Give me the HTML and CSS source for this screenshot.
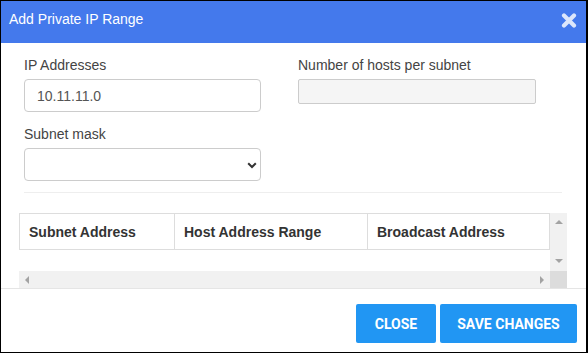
FILE: index.html
```html
<!DOCTYPE html>
<html>
<head>
<meta charset="utf-8">
<link rel="stylesheet" href="styles.css">
</head>
<body>
<div class="modal">
  <div class="modal-header">
    <h4 class="modal-title">Add Private IP Range</h4>
    <button class="close-btn" aria-label="Close">
      <svg width="16" height="15" viewBox="0 0 16 15"><path d="M3 2.5 L13 12.5 M13 2.5 L3 12.5" stroke="#dce6fb" stroke-width="4.2" stroke-linecap="round" fill="none"/></svg>
    </button>
  </div>
  <div class="modal-body">
    <div class="form-grid">
      <div class="field">
        <label>IP Addresses</label>
        <input class="input" type="text" value="10.11.11.0">
      </div>
      <div class="field">
        <label>Number of hosts per subnet</label>
        <input class="input readonly" type="text" disabled>
      </div>
      <div class="field">
        <label>Subnet mask</label>
        <div class="select-wrap">
          <select class="input select"><option></option></select>
          <svg class="chevron" width="10" height="7" viewBox="0 0 10 7"><path d="M1.2 1.2 L5 5 L8.8 1.2" stroke="#333" stroke-width="2" fill="none"/></svg>
        </div>
      </div>
    </div>
    <hr class="divider">
    <div class="scroll-box">
      <div class="scroll-view">
        <table class="results">
          <thead>
            <tr>
              <th class="c1">Subnet Address</th>
              <th class="c2">Host Address Range</th>
              <th class="c3">Broadcast Address</th>
              <th class="c4"></th>
            </tr>
          </thead>
        </table>
      </div>
      <div class="vbar"><span class="arr up"></span><span class="arr down"></span></div>
      <div class="hbar"><span class="arr left"></span><span class="arr right"></span></div>
      <div class="corner"></div>
    </div>
  </div>
  <div class="modal-footer">
    <button class="btn btn-close">Close</button>
    <button class="btn btn-save">Save changes</button>
  </div>
</div>
</body>
</html>
```
FILE: styles.css
```css
* { box-sizing: border-box; }
html, body { margin: 0; padding: 0; background: #fff; }
body { font-family: "Liberation Sans", Arial, sans-serif; }

.modal {
  width: 588px;
  height: 353px;
  border: 1px solid #000;
  border-right-width: 2px;
  display: flex;
  flex-direction: column;
  overflow: hidden;
  background: #fff;
}

.modal-header {
  height: 42px;
  flex: none;
  background: #4479ec;
  display: flex;
  justify-content: space-between;
  align-items: flex-start;
  padding: 8px 9px 0 8px;
}
.modal-title {
  margin: 0;
  font-size: 14px;
  line-height: 20px;
  font-weight: normal;
  color: #fff;
}
.close-btn {
  border: 0;
  background: none;
  padding: 0;
  margin-top: 4px;
  width: 16px;
  height: 15px;
  display: block;
}
.close-btn svg { display: block; }

.modal-body {
  flex: 1;
  padding: 12px 19px 0 18px;
}

.form-grid {
  display: grid;
  grid-template-columns: 237px 238px;
  column-gap: 37px;
  row-gap: 12px;
  align-items: start;
  padding: 0 5px;
}
.field { display: flex; flex-direction: column; }
.field label {
  font-size: 14px;
  line-height: 20px;
  color: #444;
  margin-bottom: 4px;
}
.input {
  height: 33px;
  width: 100%;
  border: 1px solid #ccc;
  border-radius: 4px;
  padding: 0 12px;
  font-family: "Liberation Sans", Arial, sans-serif;
  font-size: 14px;
  color: #555;
  background: #fff;
  outline: none;
}
.readonly {
  height: 25px;
  background: #f5f5f5;
  border-radius: 2px;
}
.select-wrap { position: relative; }
.select { appearance: none; -webkit-appearance: none; }
.chevron {
  position: absolute;
  left: 223px;
  top: 14px;
}

.divider {
  margin: 11px 5px 0;
  border: 0;
  border-top: 1px solid #eee;
  height: 0;
}

.scroll-box {
  margin-top: 20px;
  display: grid;
  grid-template-columns: 531px 17px;
  grid-template-rows: 58px 17px;
}
.scroll-view {
  overflow: hidden;
}
.results {
  border-collapse: separate;
  border-spacing: 0;
  table-layout: fixed;
  width: 730px;
}
.results th {
  text-align: left;
  font-size: 14px;
  line-height: 19px;
  font-weight: bold;
  color: #333;
  padding: 9px 9px 7px;
  border-top: 1px solid #ddd;
  border-bottom: 1px solid #ddd;
  border-left: 1px solid #ddd;
  white-space: nowrap;
}
.results .c1 { width: 155px; }
.results .c2 { width: 193px; }
.results .c3 { width: 182px; }
.results .c4 { width: 200px; }

.vbar {
  background: #f1f1f1;
  display: flex;
  flex-direction: column;
  justify-content: space-between;
  align-items: center;
  padding: 7px 0 8px;
}
.hbar {
  background: #f1f1f1;
  display: flex;
  justify-content: space-between;
  align-items: center;
  padding: 0 6px 0 6px;
}
.corner { background: #dcdcdc; }
.arr { width: 0; height: 0; display: block; }
.arr.up { border-left: 4px solid transparent; border-right: 4px solid transparent; border-bottom: 4px solid #a3a3a3; }
.arr.down { border-left: 4px solid transparent; border-right: 4px solid transparent; border-top: 4px solid #a3a3a3; }
.arr.left { border-top: 4px solid transparent; border-bottom: 4px solid transparent; border-right: 4px solid #a3a3a3; }
.arr.right { border-top: 4px solid transparent; border-bottom: 4px solid transparent; border-left: 4px solid #a3a3a3; }

.modal-footer {
  flex: none;
  border-top: 1px solid #e5e5e5;
  padding: 15px 9px 9px;
  display: flex;
  justify-content: flex-end;
  gap: 4px;
}
.btn {
  height: 39px;
  border: 0;
  border-radius: 2px;
  background: #2196f3;
  color: #fff;
  font-family: Roboto, "Liberation Sans", sans-serif;
  font-weight: bold;
  font-size: 14px;
  text-transform: uppercase;
  padding: 0 16px;
}
.btn-close { min-width: 80px; }
.btn-save { min-width: 137px; }
```
